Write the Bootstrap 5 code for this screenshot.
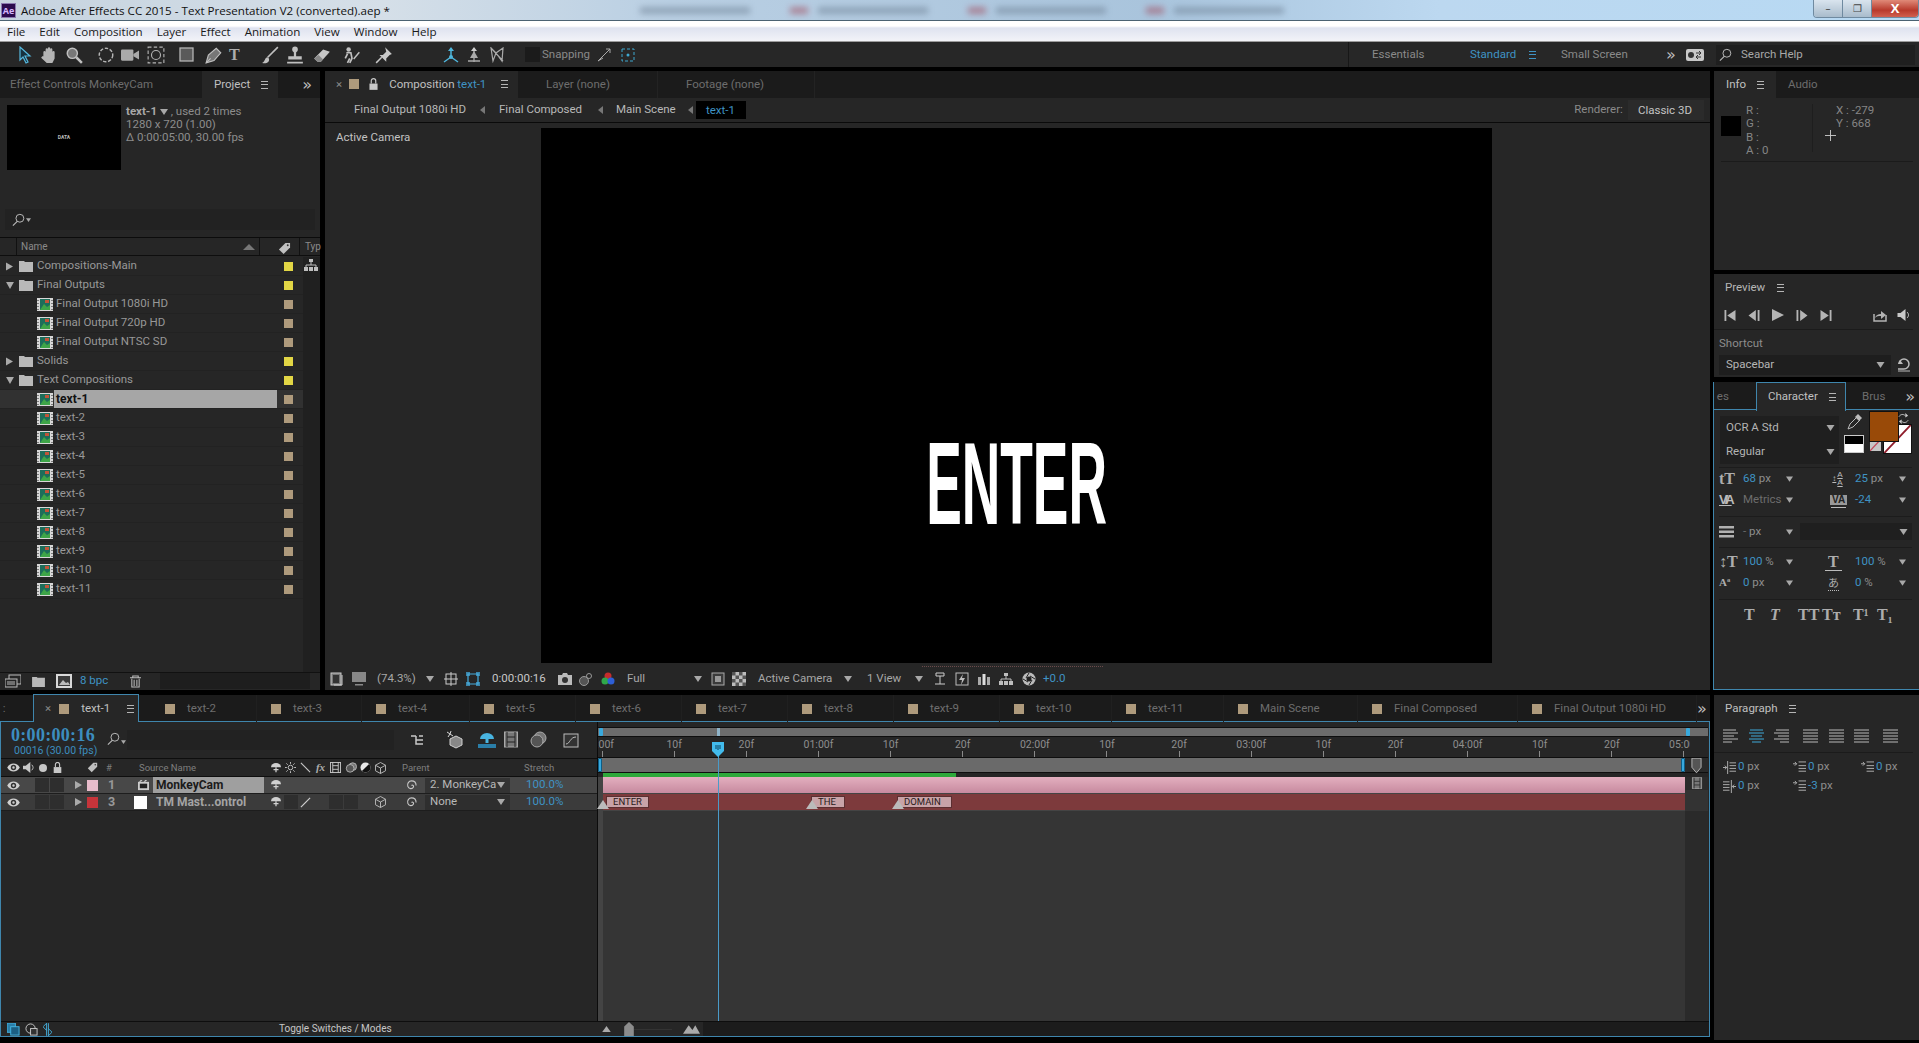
<!DOCTYPE html>
<html lang="en">
<head>
<meta charset="utf-8">
<title>Adobe After Effects CC 2015</title>
<link href="https://cdn.jsdelivr.net/npm/bootstrap@5.3.0/dist/css/bootstrap.min.css" rel="stylesheet">
<style>
html,body{margin:0;background:#000;overflow:hidden}
body{width:1919px;height:1043px;font-family:Roboto,"Liberation Sans",sans-serif;font-size:11.5px;color:#a6a6a6;line-height:1}
svg{display:block;flex:none}
.ae-app{width:1919px;height:1043px;background:#000}
/* window chrome */
.win-title{height:21px;background:linear-gradient(90deg,#c6d3df 0,#d5dfe8 20%,#b9cfe3 35%,#a9c4dc 60%,#bcd8f0 75%,#b7d9f3 100%);border-bottom:1px solid #4b6272;color:#111;font-family:"Open Sans","Liberation Sans",sans-serif;font-size:11.6px;overflow:hidden;padding-top:1px}
.ae-logo{width:15px;height:15px;margin:0 5px 0 1px;background:#2b0b4e;border:1px solid #8c7bb0;color:#d5b7ff;font-size:9px;font-weight:700;text-align:center;line-height:13px;flex:none}
.blur-strip{width:660px;margin-left:250px;gap:40px}
.blur-tab{height:7px;width:110px;background:#6f8296;filter:blur(3px);opacity:.55}
.blur-red{background:#a24a5c;width:18px;margin-right:-30px}
.win-btns{height:18px;margin-top:-4px;border:1px solid #6f8aa0;border-top:0;border-radius:0 0 4px 4px;overflow:hidden}
.wb{width:29px;height:100%;background:linear-gradient(#d9e4ee,#a9bccc);border-right:1px solid #6f8aa0;color:#444;font-size:10px;text-align:center;line-height:17px}
.wb-close{width:46px;background:linear-gradient(#e08a78,#b83a2c 60%,#d06050);color:#fff;font-weight:700;border:0;font-size:13px}
.win-menu{height:21px;background:linear-gradient(#fff 0,#fff 25%,#dfe3f0 35%,#f2f3f8 100%);border-bottom:1px solid #9c9c9c;color:#1a1a1a;font-family:"Open Sans","Liberation Sans",sans-serif;font-size:11.6px;padding:1px 0 0 7px;gap:14px}
/* toolbar */
.tool-strip{height:25px;background:#272727;margin-bottom:4px}
.tool-left{display:grid;grid-template-columns:25px 25px 32px 24px 26px 32px 26px 24px 32px 25px 27px 30px 32px 67px 23px 24px 36px 17px 55px 24px 18px;padding-left:15px;align-items:center}
.tool-right{display:grid;grid-template-columns:98px 59px 32px 105px 20px 30px 1fr;margin-left:auto;width:571px;padding-left:23px;height:100%;align-items:center;border-left:1px solid #171717}
.snap-box{width:15px;height:15px;background:#1b1b1b}
.c-blue{color:#3f93c4}
.c-dim{color:#6d6d6d}
.c-lite{color:#c8c8c8}
.c-mid{color:#8a8a8a}
.searchbox{height:20px;background:#1f1f1f;margin-right:4px;padding-left:3px;gap:8px;color:#a8a8a8}
/* layout */
.col-main{width:1710px}
.col-side{width:205px;margin-left:4px}
.upper{height:619px;gap:5px;margin-bottom:5px}
.ph{background:#262626}
.p-left{width:320px}
.p-comp{width:1385px}
.tabrow{height:27px;background:#1b1b1b}
.tabx{height:100%;background:#262626;gap:0;color:#c0c0c0}
.menu3{width:7px;height:8px;border-top:1px solid #b5b5b5;border-bottom:1px solid #b5b5b5;position:relative;flex:none}
.menu3::after{content:"";position:absolute;left:0;right:0;top:2.5px;height:1px;background:#b5b5b5}
.blue3,.blue3::after{border-color:#3f93c4}
.blue3::after{background:#3f93c4}
.dbl{font-size:16px;color:#bdbdbd;font-family:"DejaVu Sans",sans-serif;line-height:1}
/* project */
.tab-effect{width:202px;padding-left:10px}
.tab-project{width:76px;padding-left:12px;gap:11px}
.proj-info{height:111px;padding:7px 7px 0;gap:5px}
.thumb{width:114px;height:65px;background:#000;color:#bbb;font-size:5px;font-weight:700}
.info-lines{padding-top:0;line-height:13px;color:#8d8d8d}
.info-lines b{color:#a8a8a8;font-weight:700}
.proj-search{height:21px;margin:0 5px;background:#222;padding-left:7px}
.proj-search+div{height:7px}
.proj-head{height:19px;border-top:1px solid #0c0c0c;border-bottom:1px solid #0e0e0e;font-size:10px;color:#8a8a8a;display:grid;grid-template-columns:17px 243px 18px 22px 5px 1fr;align-items:center}
.hsep{border-right:1px solid #111;height:100%}
.proj-body{height:416px;padding-top:1px}
.plist{width:303px}
.typ-col{width:17px;background:#202020;padding:2px 0 0 1px}
.prow{height:19px;display:grid;align-items:center;border-bottom:1px solid #222;color:#989898}
.prow-f{grid-template-columns:19px 18px 240px 7px 9px;}
.prow-c{grid-template-columns:37px 17px 223px 7px 9px}
.prow-c .pname{padding-left:2px}
.pname{height:100%;display:flex;align-items:center}
.pin-y,.pin-t{width:9px;height:9px}
.pin-y{background:#e2d645}
.pin-t{background:#ae9a7c}
.prow-sel{background:#313131}
.prow-sel .pname{background:#a6a6a6;color:#111;font-weight:700;font-size:12px}
.tri-cell{padding-left:6px}
.proj-foot{height:17px;display:grid;grid-template-columns:27px 24px 24px 50px 30px 150px 1fr;padding-left:5px;background:#262626;align-items:center;border-top:1px solid #111}
.foot-dark{height:100%;background:#1e1e1e}
/* comp */
.tab-comp{width:193px;padding-left:11px}
.tab-comp .sw{margin:0 10px 0 7px}
.comp-lock{margin-right:11px}
.comp-name{white-space:nowrap}
.comp-menu{margin-left:15px}
.sw{width:10px;height:10px;background:#ae9a7c;flex:none}
.tab-blank{height:100%;border-right:1px solid #232323;padding-left:28px}
.tab-layer{width:140px}
.tab-foot{width:157px}
.crumbs{height:25px;border-bottom:1px solid #0a0a0a;display:grid;grid-template-columns:29px 126px 19px 99px 18px 72px 8px 50px 1fr 145px;align-items:center;color:#b9b9b9;white-space:nowrap}
.crumb-on{height:18px;background:#000;padding-left:10px;line-height:18px}
.renderer{gap:5px;padding-right:6px;justify-content:flex-end;white-space:nowrap}
.renderer span{height:20px;line-height:20px;background:#2b2b2b;padding:0 12px 0 10px;color:#c4c4c4}
.viewer{height:545px}
.v-left{width:216px;padding:9px 0 0 11px;color:#c2c2c2}
.canvas-col{width:951px}
.canvas{width:951px;height:535px;margin-top:5px;background:#000;padding-top:316px}
.canvas-dots{width:181px;height:1px;margin:3px 0 0 381px;border-top:1px dotted #6a4a4a}
.enter{display:inline-block;font-family:"Liberation Sans",sans-serif;font-weight:700;font-size:116px;line-height:80px;height:80px;color:#fff;transform:scaleX(.46);letter-spacing:0}
.comp-foot{height:23px;display:grid;grid-template-columns:22px 25px 49px 18px 22px 26px 66px 21px 22px 26px 67px 17px 21px 26px 86px 23px 48px 18px 22px 22px 22px 23px 21px 1fr;padding-left:5px;align-items:center;color:#a8a8a8;white-space:nowrap}
/* timeline */
.tl{height:342px}
.tl-tabs{height:27px;background:#1b1b1b;display:grid;grid-template-columns:33px 106px 118px 105px 108px 106px 106px 106px 106px 106px 112px 112px 134px 160px 179px 1fr;border-bottom:1px solid #3f86ad;color:#6e6e6e;align-items:center}
.tl-on{height:28px;margin-top:-1px;background:#262626;border:1px solid #3f86ad;border-bottom:0;color:#c0c0c0;padding-left:11px;gap:8px;position:relative;z-index:2;align-self:start}
.tl-on .sw{margin-right:4px}
.tl-menu{margin-left:9px}
.tl-t{padding-left:14px;gap:12px;height:100%;border-right:1px solid #202020;white-space:nowrap}
.tl-t2{padding-left:26px}
.tl-wrap{height:315px;border:1px solid #3f86ad;border-top:0}
.tl-main{height:299px}
.tl-l{width:597px;border-right:1px solid #0b0b0b}
.tl-ctl{height:37px;border-bottom:1px solid #0e0e0e}
.tc-time{width:106px;padding:3px 0 0 10px}
.tc-big{font-family:"Liberation Serif",serif;font-weight:700;font-size:18px;color:#3c8dbf;letter-spacing:.3px}
.tc-sub{margin:2px 0 0 3px;font-size:10.5px;color:#3c8dbf;white-space:nowrap}
.tc-find{width:20px;margin-top:-2px}
.tc-searchbar{width:267px;height:20px;background:#222;margin-right:16px}
.tc-icons{display:grid;grid-template-columns:35px 33px 26px 25px 34px 18px}
.layer-grid{display:grid;grid-template-columns:4px 16px 14px 15px 14px 23px 11px 36px 19px 111px 4px 120px 37px 85px 14px 1fr;align-items:center;height:100%}
.layer-grid>svg{justify-self:center}
.lh{height:18px;border-bottom:1px solid #0e0e0e;font-size:9.5px;color:#7f7f7f}
.lr{height:17px;border-bottom:1px solid #1d1d1d;font-size:11.5px}
.lr1{background:#484848}
.lr2{background:#3b3b3b}
.switch{display:grid;grid-template-columns:repeat(8,15px);align-items:center;height:100%;justify-items:center}
.dk{width:14px;height:14px;background:#2e2e2e}
.lname{height:100%;padding-left:3px;font-weight:700;font-size:12px;display:flex;align-items:center;white-space:nowrap}
.lr1 .lname{background:#9f9f9f;color:#1b1b1b}
.lr2 .lname{color:#a4a4a4}
.lnum{padding-left:10px;font-weight:700;color:#999;font-size:12.5px}
.label-p,.label-r{width:11px;height:11px}
.label-p{background:#e8bccb}
.label-r{background:#c6343a}
.swcell{width:13px;height:13px;background:#fff}
.pdrop{height:15px;background:#2e2e2e;padding:0 5px 0 5px;color:#b8b8b8;white-space:nowrap;justify-content:space-between}
.lr1 .pdrop{background:#333}
.pdrop-clip{display:block;width:66px;overflow:hidden;flex:none}
.nudge-src{margin-left:-14px;white-space:nowrap}
.nudge-par{margin-left:-23px}
.nudge-arr{margin-left:5px}
.nudge-spi{margin-left:9px}
.pct{padding-left:2px}
.tl-r{width:1110px;background:#333;position:relative}
.tr-top{height:5px;background:#262626}
.tr-nav{height:9px;background:#6c6c6c;border-top:1px solid #0e0e0e;position:relative}
.tr-ruler{height:21px;background:#262626;border-top:1px solid #0e0e0e;overflow:hidden;width:1092px;color:#8e8e8e;font-size:10.5px}
.ruler-in{margin-left:-32px;width:1300px}
.rcell{width:72.13px;flex:none;height:100%;padding-top:3px;display:flex;flex-direction:column;align-items:center;justify-content:space-between}
.rcell i{display:block;width:1px;height:7px;background:#8a8a8a}
.tr-work{height:16px;background:#6a6a6a;border-top:1px solid #0e0e0e;border-bottom:1px solid #0e0e0e}
.tr-ruler-row{background:#262626}
.handle{width:4px;height:14px;background:#39a9dd;border:1px solid #0d5d86;border-radius:1px;flex:none}
.tr-green{height:4px;background:#252525;padding-left:5px}
.tr-green i{display:block;height:4px;width:353px;background:#2da83a}
.track{height:17px;padding-left:5px;background:#444}
.track-wrap{width:1087px;display:flex}
.bar-p{height:16px;width:1082px;background:linear-gradient(#e3afbf,#c78a9f)}
.bar-r{height:16px;width:1082px;background:#7d3a3c;position:relative}
.track-end{width:23px;background:#2a2a2a;height:100%}
.tr-rest{height:210px;display:flex}
.rest-a{width:5px;background:#444}
.rest-b{width:1082px;background:#353535}
.rest-c{flex:1;background:#2a2a2a}
.mk{position:absolute;top:2px;height:12px;background:#c8a3a8;color:#2a1a1a;font-size:9.5px;line-height:10px;padding-left:6px;border:1px solid #5b2f31}
.mk1{left:3px;width:43px}
.mk2{left:208px;width:34px}
.mk3{left:294px;width:55px}
.mk-tri{position:absolute;width:0;height:0;border-left:6px solid transparent;border-right:6px solid transparent;border-bottom:9px solid #bbb;top:6px;z-index:1}
.mt1{left:-6px}
.mt2{left:203px}
.mt3{left:289px}
.ph-line{position:absolute;left:120px;top:34px;bottom:0;width:1px;background:#4a9ac8;z-index:3}
.ph-head{position:absolute;left:114px;top:20px;z-index:4}
.nav-ph{position:absolute;left:119px;top:0;width:3px;height:100%;background:#8fb3c8}
.nav-end-l{position:absolute;left:1px;top:0}
.nav-end-r{position:absolute;left:1088px;top:0}
.tl-bot{height:15px;display:grid;grid-template-columns:18px 18px 236px 323px 1fr;padding-left:6px;background:linear-gradient(90deg,#262626 702px,#1c1c1c 702px);border-top:1px solid #0e0e0e;align-items:center;color:#c6c6c6;font-size:10px;white-space:nowrap}
.zoombar{gap:0}
.zline{width:38px;height:1px;background:#333}
.z-a{margin-right:13px}
.z-b{margin-left:11px}
/* side */
.s-info{height:199px;margin-bottom:4px}
.tab-info{width:62px;padding-left:12px;gap:11px;height:100%;background:#262626;color:#c0c0c0}
.info-c{height:64px;margin:0 6px 0 7px;border-bottom:1px solid #1b1b1b;color:#858585;padding-top:6px}
.ic-sw{width:20px;height:20px;background:#000;margin:12px 5px 0 0}
.ic-rgb{width:67px;line-height:13.3px;border-right:1px solid #1e1e1e;padding-bottom:0;height:48px}
.ic-xy{line-height:13px;padding-left:23px}
.xy-cross{margin-left:-11px}
.s-prev{height:103px;margin-bottom:5px}
.prev-h{height:27px;padding-left:11px;gap:12px;color:#b6b6b6}
.prev-ctl{height:29px;display:grid;grid-template-columns:24px 24px 24px 24px 53px 24px 1fr;padding-left:10px;margin:0 6px 0 0;align-items:center;border-bottom:1px solid #1b1b1b}
.short-l{padding:8px 0 0 5px;color:#8d8d8d}
.short-d{height:20px;margin:5px 6px 0 5px;gap:0;color:#b6b6b6}
.dd-fill{background:#1e1e1e;height:100%;width:172px;padding:0 6px 0 7px}
.loop-gap{margin-left:6px}
.s-char{height:308px;margin-bottom:5px;background:#262626;border-left:1px solid #3f86ad;border-bottom:1px solid #3f86ad;margin-left:-1px}
.ch-tabs{height:28px;background:#1b1b1b;display:grid;grid-template-columns:42px 90px 52px 1fr;align-items:center;border-bottom:1px solid #3f86ad;color:#6e6e6e}
.ch-on{height:29px;margin-top:0;background:#262626;border:1px solid #3f86ad;border-bottom:0;color:#c0c0c0;padding-left:11px;gap:11px;align-self:start}
.ch-top{height:57px;padding:6px 0 0 6px}
.dds{width:120px}
.dd{height:24px;background:#1f1f1f;padding:0 4px 0 6px;color:#b4b4b4;margin-bottom:0}
.sw-zone{width:80px;height:50px}
.s-white{position:absolute;left:44px;top:8px;width:29px;height:30px;background:#fff;border:1px solid #111}
.s-brown{position:absolute;left:30px;top:-5px;width:30px;height:31px;background:#994a08;border:1px solid #111}
.s-bw{position:absolute;left:5px;top:19px;width:20px;height:18px;border:1px solid #ccc;background:linear-gradient(#000 50%,#fff 50%)}
.s-none{position:absolute;left:31px;top:23px;width:11px;height:12px;background:#c6c6c6}
.s-drop{position:absolute;left:8px;top:-2px}
.s-swap{position:absolute;left:59px;top:-3px}
.ch-sec{margin:0 7px 0 5px;border-top:1px solid #1c1c1c}
.mg{display:grid;grid-template-columns:24px 43px 34px 35px 44px 1fr;height:21px;align-items:center;color:#8e8e8e}
.mg .v,.pp .v{color:#3f93c4}
.gl{font-family:"Liberation Serif",serif;font-weight:700;color:#adadad;font-size:16px;line-height:1;white-space:nowrap}
.gl-s{font-size:11px}
.stack{font-family:"Liberation Sans",sans-serif;font-size:8px;line-height:8px;color:#bbb;display:flex;align-items:center;justify-content:center;gap:1px;text-decoration:underline}
.kern{font-family:"Liberation Sans",sans-serif;font-weight:700;font-size:13px;letter-spacing:-3px;color:#bbb;text-decoration:underline}
.va-box{background:#999;color:#222;font-family:"Liberation Sans",sans-serif;font-weight:700;font-size:10px;line-height:10px;padding:0 2px;display:inline-block;margin-left:10px;box-shadow:0 3px 0 -1px #262626,0 4px 0 -1px #bbb}
.jp{font-family:"Noto Sans CJK JP",sans-serif;font-weight:400;border-bottom:1px dotted #bbb}
.wide-t{border-bottom:1px solid #bbb;padding:0 3px;margin-left:5px}
.ch-sec1{height:49px;padding-top:0}
.ch-sec2{height:31px;padding-top:4px}
.ch-sec3{height:52px;padding-top:3px}
.ch-sec4{padding-top:4px}
.ch-styles{display:grid;grid-template-columns:26px 28px 24px 31px 24px 1fr;padding-left:25px;height:21px;align-items:center}
.ch-wide{height:17px;background:#1f1f1f;width:112px;padding:0 4px;margin-left:-20px}
.s-para{height:345px}
.para-h{height:27px;padding-left:11px;gap:11px;color:#c0c0c0}
.para-al{display:grid;grid-template-columns:26px 25px 29px 26px 25px 29px 1fr;height:31px;padding:7px 0 0 9px;margin:0 6px 0 0;align-items:start;border-bottom:1px solid #1b1b1b}
.pp{display:grid;grid-template-columns:15px 55px 15px 53px 15px 1fr;height:18px;padding-left:9px;align-items:center;color:#8e8e8e;margin-top:1px}
.para-al+.pp{margin-top:5px}
.task{height:3px;margin-top:3px;background:#5a7c93;gap:4px;padding-left:120px}
.task i{display:block;width:56px;height:3px;background:#e8eef2}
</style>
</head>
<body>
<svg width="0" height="0" style="position:absolute">
<symbol id="dn" viewBox="0 0 8 6"><path d="M0 0h8L4 6z" fill="#a8a8a8"/></symbol>
<symbol id="up" viewBox="0 0 12 6"><path d="M0 6L6 0l6 6z" fill="#777"/></symbol>
<symbol id="rt" viewBox="0 0 8 9"><path d="M0 0l8 4.500L0 9z" fill="#aaa"/></symbol>
<symbol id="dt" viewBox="0 0 9 8"><path d="M0 0h9L4.500 8z" fill="#aaa"/></symbol>
<symbol id="lt" viewBox="0 0 5 8"><path d="M5 0v8L0 4z" fill="#777"/></symbol>
<symbol id="arrow" viewBox="0 0 16 18"><path d="M4 1v13l3-3 3 6 2-1-3-6h5z" fill="#16323f" stroke="#56b8de" stroke-width="1.200"/></symbol>
<symbol id="hand" viewBox="0 0 16 16"><path d="M3 9V5.500a1 1 0 0 1 2 0V3a1 1 0 0 1 2 0V2a1 1 0 0 1 2 0v1a1 1 0 0 1 2 0v2.500a1 1 0 0 1 2 0V11l-2 4H6L1 10.500 2 9z" fill="#b4b4b4"/></symbol>
<symbol id="mag" viewBox="0 0 16 16"><circle cx="6.500" cy="6.500" r="4.500" fill="#777" stroke="#c0c0c0" stroke-width="1.300"/><path d="M10 10l5 5" stroke="#c0c0c0" stroke-width="2.200"/></symbol>
<symbol id="find" viewBox="0 0 16 16"><circle cx="9" cy="6" r="4.500" fill="none" stroke="#bcbcbc" stroke-width="1.100"/><path d="M6 9.500l-5 5" stroke="#bcbcbc" stroke-width="1.300"/></symbol>
<symbol id="rot" viewBox="0 0 16 16"><circle cx="8" cy="8" r="6" fill="none" stroke="#b4b4b4" stroke-width="1.300" stroke-dasharray="3 1.500"/></symbol>
<symbol id="cam" viewBox="0 0 16 16"><rect x="0" y="3" width="11" height="10" rx="1" fill="#aaa"/><path d="M11 7l5-3v8l-5-3z" fill="#aaa"/></symbol>
<symbol id="orb" viewBox="0 0 16 16"><rect x="1" y="1" width="14" height="14" fill="none" stroke="#b4b4b4" stroke-dasharray="3 2"/><circle cx="8" cy="8" r="4" fill="none" stroke="#b4b4b4"/></symbol>
<symbol id="rect" viewBox="0 0 16 16"><rect x="1" y="1" width="13" height="13" fill="#5a5a5a" stroke="#b4b4b4" stroke-width="1.300"/></symbol>
<symbol id="pen" viewBox="0 0 16 16"><path d="M1 15l2-7 7-6 4 4-6 7z" fill="#777" stroke="#c0c0c0"/><path d="M1 15l4-4" stroke="#c0c0c0"/></symbol>
<symbol id="brush" viewBox="0 0 16 16"><path d="M15 1L6 10" stroke="#c0c0c0" stroke-width="1.500"/><path d="M6 10c-3 0-2 4-5 5 4 1 7-1 6-4z" fill="#c0c0c0"/></symbol>
<symbol id="stamp" viewBox="0 0 16 16"><circle cx="8" cy="3" r="2.500" fill="#c0c0c0"/><path d="M7 5h2v4h5v3H2V9h5zM1 14h14v1.500H1z" fill="#c0c0c0"/></symbol>
<symbol id="eraser" viewBox="0 0 16 16"><path d="M1 11l8-8 6 2-8 9H4z" fill="#c8c8c8"/><path d="M1 11l3 3h3l2-2-4-4z" fill="#888"/></symbol>
<symbol id="roto" viewBox="0 0 16 16"><circle cx="5" cy="3" r="2" fill="#c0c0c0"/><path d="M3 6l4 0 1 5-2 4M4 7L2 11M6 11L4 15" stroke="#c0c0c0" stroke-width="1.500" fill="none"/><path d="M9 11l5-6 1 1-5 6z" fill="#c0c0c0"/></symbol>
<symbol id="pin" viewBox="0 0 16 16"><path d="M9 1l6 6-2 1-3 3 0 3-6-6 3 0 3-3z" fill="#c8c8c8"/><path d="M6 10l-5 5" stroke="#c8c8c8" stroke-width="1.300"/></symbol>
<symbol id="axb" viewBox="0 0 18 16"><path d="M9 1v9M9 10l-7 5M9 10l7 5" stroke="#4fb6dc" stroke-width="1.500"/><path d="M9 0l-3 4h6z" fill="#4fb6dc"/><circle cx="9" cy="10" r="2" fill="#4fb6dc"/></symbol>
<symbol id="axg" viewBox="0 0 18 16"><path d="M9 1v14M3 14h12" stroke="#aaa" stroke-width="1.300"/><path d="M5 11l4-7 4 7z" fill="#aaa"/><path d="M9 0l-3 4h6z" fill="#ccc"/></symbol>
<symbol id="axx" viewBox="0 0 16 16"><path d="M2 1l5 5-3 8zM14 1l-7 5 6 8zM2 1l12 13" fill="none" stroke="#aaa" stroke-width="1.200"/></symbol>
<symbol id="snap1" viewBox="0 0 14 14"><path d="M1 13L13 1M13 1H9M13 1v4M1 13l5-3" stroke="#aaa" fill="none"/></symbol>
<symbol id="snap2" viewBox="0 0 14 14"><rect x="1" y="1" width="12" height="12" fill="none" stroke="#3fa8d0" stroke-dasharray="3 2"/><circle cx="7" cy="7" r="1.500" fill="#3fa8d0"/></symbol>
<symbol id="vr" viewBox="0 0 18 12"><rect width="18" height="12" rx="2" fill="#c8c8c8"/><circle cx="5" cy="6" r="3" fill="#333"/><path d="M10 4h5M10 8h5M13 2l2 2-2 2M12 6l-2 2 2 2" stroke="#333" fill="none"/></symbol>
<symbol id="folder" viewBox="0 0 14 12"><path d="M0 1h5l1 1h8v10H0z" fill="#b9b9b9"/></symbol>
<symbol id="comp" viewBox="0 0 16 13"><rect width="16" height="13" fill="#d8d8d8"/><rect x="3" y="1" width="10" height="11" fill="#1e6d5a"/><path d="M3 12l4-6 3 3 3-2v5z" fill="#3ea548"/><rect x="8" y="2" width="4" height="3" fill="#c25438"/><path d="M1 2v1M1 5v1M1 8v1M1 11v1M15 2v1M15 5v1M15 8v1M15 11v1" stroke="#222"/></symbol>
<symbol id="tag" viewBox="0 0 14 14"><path d="M1 8l7-7h5v5l-7 7z" fill="#c0c0c0"/><circle cx="10.500" cy="3.500" r="1" fill="#333"/></symbol>
<symbol id="tree" viewBox="0 0 14 12"><path d="M5 0h4v3H5zM0 8h4v4H0zM5 8h4v4H5zM10 8h4v4h-4z" fill="#bdbdbd"/><path d="M7 3v3M2 8V6h10v2" stroke="#bdbdbd" fill="none"/></symbol>
<symbol id="newcomp" viewBox="0 0 16 14"><rect x="4" y="1" width="12" height="9" fill="none" stroke="#bbb"/><rect x="0" y="5" width="12" height="8" fill="#262626" stroke="#bbb"/><path d="M2 8h8M2 10h8" stroke="#bbb"/></symbol>
<symbol id="imgico" viewBox="0 0 16 14"><rect width="16" height="14" fill="#d8d8d8"/><rect x="2" y="2" width="12" height="10" fill="#3a3a3a"/><path d="M3 11l4-5 3 3 2-1 2 3z" fill="#bbb"/></symbol>
<symbol id="trash" viewBox="0 0 12 14"><path d="M0 3h12M3 3V1h6v2M2 4v9h8V4M4.500 5v7M7.500 5v7" stroke="#bdbdbd" fill="none" stroke-width="1.100"/></symbol>
<symbol id="eye" viewBox="0 0 14 10"><path d="M0 5c3-6 11-6 14 0-3 6-11 6-14 0z" fill="#d0d0d0"/><circle cx="7" cy="5" r="3" fill="#333"/><circle cx="7" cy="5" r="1.300" fill="#ccc"/></symbol>
<symbol id="spk" viewBox="0 0 12 12"><path d="M0 4h3l5-4v12L3 8H0z" fill="#c8c8c8"/><path d="M9.500 3c2 2 2 4 0 6" stroke="#c8c8c8" fill="none"/></symbol>
<symbol id="lock" viewBox="0 0 10 13"><path d="M2.500 6V3a2.500 2.500 0 0 1 5 0v3" fill="none" stroke="#c8c8c8" stroke-width="1.300"/><rect x="0.500" y="6" width="9" height="7" fill="#c8c8c8"/></symbol>
<symbol id="shy" viewBox="0 0 14 12"><path d="M1 5a6 5 0 0 1 12 0z" fill="#d0d0d0"/><path d="M7 5v6M4 8h6" stroke="#d0d0d0" stroke-width="1.500"/></symbol>
<symbol id="shyb" viewBox="0 0 18 16"><path d="M2 7a7 6 0 0 1 14 0z" fill="#49b4e0"/><path d="M9 7v4" stroke="#49b4e0" stroke-width="3"/><path d="M0 12h18v4H0z" fill="#2a7ea8"/></symbol>
<symbol id="sun" viewBox="0 0 12 12"><circle cx="6" cy="6" r="2.500" fill="none" stroke="#c8c8c8"/><path d="M6 0v2M6 10v2M0 6h2M10 6h2M1.500 1.500l1.500 1.500M9 9l1.500 1.500M1.500 10.500L3 9M9 3l1.500-1.500" stroke="#c8c8c8"/></symbol>
<symbol id="slash" viewBox="0 0 12 12"><path d="M1 1l10 10" stroke="#c8c8c8" stroke-width="1.200"/></symbol>
<symbol id="slash2" viewBox="0 0 12 12"><path d="M1 11L11 1" stroke="#d0d0d0" stroke-width="1.300"/></symbol>
<symbol id="film" viewBox="0 0 12 12"><rect x="0.500" y="0.500" width="11" height="11" fill="none" stroke="#c8c8c8"/><path d="M3 0v12M9 0v12M3 4h6M3 8h6" stroke="#c8c8c8"/></symbol>
<symbol id="mb" viewBox="0 0 14 12"><circle cx="9" cy="5" r="4.500" fill="#777" stroke="#bbb"/><circle cx="6" cy="7" r="4.500" fill="#555" stroke="#bbb"/></symbol>
<symbol id="adj" viewBox="0 0 12 12"><circle cx="6" cy="6" r="5.500" fill="#e8e8e8"/><path d="M9.900 2.100a5.500 5.500 0 0 1-7.800 7.800z" fill="#111"/></symbol>
<symbol id="cube" viewBox="0 0 12 13"><path d="M6 .500l5.500 3v6L6 12.500.5 9.500v-6zM.5 3.500L6 6.500l5.500-3M6 6.500v6" fill="none" stroke="#c0c0c0"/></symbol>
<symbol id="spiral" viewBox="0 0 12 12"><path d="M6 6c1-1 3 0 2 2s-5 2-6-1 1-6 4-6 5 2 5 5" fill="none" stroke="#c8c8c8" stroke-width="1.200"/></symbol>
<symbol id="srcico" viewBox="0 0 12 12"><rect y="2" width="12" height="9" fill="#ccc"/><rect x="2" y="4" width="8" height="5" fill="#222"/><path d="M1 2l2-2h2L3 2zM6 2l2-2h2L8 2z" fill="#ccc"/></symbol>
<symbol id="comm" viewBox="0 0 14 12"><path d="M0 2h5M5 2v4M5 6h7M8 2h4M8 10h4M5 6v4h3" stroke="#c8c8c8" fill="none" stroke-width="1.500"/></symbol>
<symbol id="dcube" viewBox="0 0 18 18"><path d="M5 3l-3-2M5 3L3 6M5 3l1-3M5 3L8 5" stroke="#d8d8d8"/><path d="M11 5l6 3v6l-6 3-6-3V8z" fill="#888" stroke="#d0d0d0"/></symbol>
<symbol id="dfilm" viewBox="0 0 14 18"><rect x="0.500" y="1" width="13" height="15" fill="#777" stroke="#aaa"/><path d="M3 1v15M11 1v15M3 6h8M3 11h8" stroke="#222"/></symbol>
<symbol id="dmb" viewBox="0 0 18 18"><circle cx="11" cy="7" r="6" fill="#777" stroke="#aaa"/><circle cx="8" cy="10" r="6" fill="#555" stroke="#aaa"/></symbol>
<symbol id="graph" viewBox="0 0 16 16"><rect x="1" y="2" width="14" height="13" fill="#333" stroke="#bbb"/><path d="M3 12c4 0 4-7 10-7" stroke="#bbb" fill="none"/></symbol>
<symbol id="fr1" viewBox="0 0 14 14"><rect x="1" y="1" width="10" height="12" fill="#777" stroke="#ccc"/><rect x="3" y="3" width="6" height="8" fill="#333"/><path d="M12 3v10H4" fill="none" stroke="#ccc"/></symbol>
<symbol id="mon" viewBox="0 0 14 14"><rect y="0" width="14" height="10" fill="#888"/><path d="M3 12h8v1.500H3z" fill="#888"/></symbol>
<symbol id="gridc" viewBox="0 0 14 14"><rect x="2" y="2" width="10" height="10" fill="none" stroke="#ccc"/><path d="M7 0v14M0 7h14" stroke="#ccc"/></symbol>
<symbol id="mask" viewBox="0 0 14 14"><path d="M2 2h10v10H2z" fill="none" stroke="#46aee0" stroke-width="1.200"/><path d="M0 0h4v4H0zM10 0h4v4h-4zM0 10h4v4H0zM10 10h4v4h-4z" fill="#46aee0" opacity=".7"/></symbol>
<symbol id="camr" viewBox="0 0 14 12"><path d="M0 2h4l1-2h4l1 2h4v10H0z" fill="#bbb"/><circle cx="7" cy="7" r="3" fill="#333"/></symbol>
<symbol id="snapb" viewBox="0 0 14 14"><circle cx="5" cy="9" r="4.500" fill="#555" stroke="#999"/><circle cx="10" cy="4" r="2.500" fill="none" stroke="#999"/></symbol>
<symbol id="rgb" viewBox="0 0 14 14"><circle cx="7" cy="4" r="3.500" fill="#c42c2c"/><circle cx="4" cy="9" r="3.500" fill="#2fa84a"/><circle cx="10" cy="9" r="3.500" fill="#2e5fd6"/></symbol>
<symbol id="rr" viewBox="0 0 14 14"><rect x="1" y="1" width="12" height="12" fill="#3b3b3b" stroke="#aaa"/><rect x="4" y="4" width="6" height="6" fill="#999"/></symbol>
<symbol id="check" viewBox="0 0 14 14"><rect width="14" height="14" fill="#bbb"/><path d="M0 0h3.500v3.500H0zM7 0h3.500v3.500H7zM3.500 3.500H7V7H3.500zM10.500 3.500H14V7h-3.500zM0 7h3.500v3.500H0zM7 7h3.500v3.500H7zM3.500 10.500H7V14H3.500zM10.500 10.500H14V14h-3.500z" fill="#555"/></symbol>
<symbol id="lr" viewBox="0 0 14 14"><path d="M7 4v8M3 1h8v3H3zM2 12h10" stroke="#ccc" fill="none"/></symbol>
<symbol id="fast" viewBox="0 0 14 14"><rect x="1" y="1" width="12" height="12" fill="none" stroke="#bbb"/><path d="M8 2L4 8h3l-1 5 4-7H7z" fill="#bbb"/></symbol>
<symbol id="flow" viewBox="0 0 14 14"><rect x="1" y="5" width="3" height="8" fill="#aaa"/><rect x="5.500" y="2" width="3" height="11" fill="#ddd"/><rect x="10" y="5" width="3" height="8" fill="#aaa"/></symbol>
<symbol id="shutter" viewBox="0 0 14 14"><circle cx="7" cy="7" r="6.500" fill="#bbb"/><circle cx="7" cy="7" r="2.500" fill="#222"/><path d="M7 1L4 6M13 7l-5-3M7 13l3-5M1 7l5 3" stroke="#222"/></symbol>
<symbol id="first" viewBox="0 0 12 12"><path d="M0 0h2v12H0zM12 0v12L3 6z" fill="#b4b4b4"/></symbol>
<symbol id="prevf" viewBox="0 0 12 12"><path d="M8 0v12L0 6zM10 0h2v12h-2z" fill="#b4b4b4"/></symbol>
<symbol id="playf" viewBox="0 0 12 12"><path d="M0 0v12l12-6z" fill="#b4b4b4"/></symbol>
<symbol id="nextf" viewBox="0 0 12 12"><path d="M0 0h2v12H0zM4 0v12l8-6z" fill="#b4b4b4"/></symbol>
<symbol id="last" viewBox="0 0 12 12"><path d="M0 0v12l9-6zM10 0h2v12h-2z" fill="#b4b4b4"/></symbol>
<symbol id="export" viewBox="0 0 14 13"><path d="M1 5v7h12V6" fill="none" stroke="#b4b4b4" stroke-width="1.500"/><path d="M2 9c1-3 3-4 6-4V2l5 4-5 4V7c-3 0-4 0-6 2z" fill="#b4b4b4"/></symbol>
<symbol id="loop" viewBox="0 0 14 14"><path d="M2 6a5 5 0 1 1 5 5H1" fill="none" stroke="#bbb" stroke-width="1.500"/><path d="M1 6h5L3 2z" fill="#bbb"/><path d="M1 13h12" stroke="#bbb"/></symbol>
<symbol id="drop" viewBox="0 0 16 16"><path d="M1 15l2-5 7-7 3 3-7 7z" fill="none" stroke="#bbb"/><path d="M9 2l2-2 4 4-2 2-1 1-4-4z" fill="#bbb"/></symbol>
<symbol id="swap" viewBox="0 0 12 12"><path d="M1 4c2-3 5-3 7-1M11 8c-2 3-5 3-7 1" fill="none" stroke="#ccc"/><path d="M8 0v5l3-2zM4 12V7L1 9z" fill="#ccc"/></symbol>
<symbol id="line" viewBox="0 0 30 32"><path d="M0 32L30 0" stroke="#8f1d2b" stroke-width="2"/></symbol>
<symbol id="lsm" viewBox="0 0 11 12"><path d="M0 12L11 0" stroke="#c34a5c" stroke-width="1.200"/></symbol>
<symbol id="eq" viewBox="0 0 15 13"><path d="M0 1h15v2.500H0zM0 5.500h15V8H0zM0 10h15v2.500H0z" fill="#b0b0b0"/></symbol>
<symbol id="hshield" viewBox="0 0 12 16"><path d="M1 0h10v10l-5 6-5-6z" fill="#555" stroke="#bbb"/></symbol>
<symbol id="head" viewBox="0 0 12 15"><path d="M0 0h12v9l-6 6-6-6z" fill="#42bbec"/><path d="M4 3v4M6 3v5M8 3v4" stroke="#08425e"/></symbol>
<symbol id="al" viewBox="0 0 15 15"><path d="M0 1h13M0 4h15M0 7h11M0 10h15M0 13h9" stroke="#b8b8b8"/></symbol>
<symbol id="ac" viewBox="0 0 15 15"><path d="M1 1h13M0 4h15M2 7h11M0 10h15M3 13h9" stroke="#3fa8d8"/></symbol>
<symbol id="ar" viewBox="0 0 15 15"><path d="M2 1h13M0 4h15M4 7h11M0 10h15M6 13h9" stroke="#b8b8b8"/></symbol>
<symbol id="aj" viewBox="0 0 15 15"><path d="M0 1h15M0 4h15M0 7h15M0 10h15M0 13h15" stroke="#b8b8b8"/></symbol>
<symbol id="pa" viewBox="0 0 14 14"><path d="M5 0v14M7 2h7M7 5h7M7 8h7M7 11h7M0 7h4M2 5l2 2-2 2" stroke="#b4b4b4" fill="none"/></symbol>
<symbol id="pb" viewBox="0 0 14 14"><path d="M9 0v14M0 2h7M0 5h7M0 8h7M0 11h7M10 7h4M12 5l-2 2 2 2" stroke="#b4b4b4" fill="none"/></symbol>
<symbol id="pc" viewBox="0 0 14 14"><path d="M6 1h8M6 5h8M6 8h8M6 11h8M0 3h4M2 1l2 2-2 2" stroke="#b4b4b4" fill="none"/></symbol>
<symbol id="ic1" viewBox="0 0 14 14"><rect x="0" y="0" width="9" height="10" fill="#2a7ea8" stroke="#46b6e4"/><rect x="4" y="4" width="9" height="9" fill="#1c5f83" stroke="#46b6e4"/></symbol>
<symbol id="ic2" viewBox="0 0 14 14"><circle cx="6" cy="6" r="5" fill="none" stroke="#ccc"/><rect x="6" y="6" width="7" height="7" fill="#333" stroke="#ccc"/></symbol>
<symbol id="ic3" viewBox="0 0 10 14"><path d="M4 0L0 4l4 4M6 6l4 4-4 4M4 0v14M6 0v14" stroke="#46b6e4" fill="none"/></symbol>
<symbol id="mtn1" viewBox="0 0 10 7"><path d="M0 7l5-7 5 7z" fill="#aaa"/></symbol>
<symbol id="mtn2" viewBox="0 0 18 10"><path d="M0 10L6 1l4 5 3-5 5 9z" fill="#aaa"/></symbol>
<symbol id="slid" viewBox="0 0 11 16"><path d="M0 5l5.500-5L11 5v11H0z" fill="#8c8c8c"/></symbol>
<symbol id="cross" viewBox="0 0 12 12"><path d="M6 0v12M0 6h12" stroke="#ccc"/></symbol>
</svg>

<div class="ae-app">
  <header class="win-title d-flex align-items-center">
    <span class="ae-logo">Ae</span>
    <span class="text-nowrap">Adobe After Effects CC 2015 - Text Presentation V2 (converted).aep *</span>
    <span class="blur-strip d-flex"><i class="blur-tab"></i><i class="blur-tab blur-red"></i><i class="blur-tab"></i><i class="blur-tab blur-red"></i><i class="blur-tab"></i><i class="blur-tab blur-red"></i><i class="blur-tab"></i></span>
    <span class="win-btns ms-auto d-flex"><span class="wb">–</span><span class="wb">❐</span><span class="wb wb-close">X</span></span>
  </header>
  <nav class="win-menu d-flex align-items-center">
    <span>File</span><span>Edit</span><span>Composition</span><span>Layer</span><span>Effect</span><span>Animation</span><span>View</span><span>Window</span><span>Help</span>
  </nav>
  <div class="tool-strip d-flex align-items-center">
    <div class="tool-left">
      <svg width="18" height="18"><use href="#arrow"/></svg>
      <svg width="18" height="18"><use href="#hand"/></svg>
      <svg width="18" height="18"><use href="#mag"/></svg>
      <svg width="18" height="18"><use href="#rot"/></svg>
      <svg width="18" height="18"><use href="#cam"/></svg>
      <svg width="18" height="18"><use href="#orb"/></svg>
      <svg width="16" height="16"><use href="#rect"/></svg>
      <svg width="18" height="18"><use href="#pen"/></svg>
      <span class="gl">T</span>
      <svg width="18" height="18"><use href="#brush"/></svg>
      <svg width="18" height="18"><use href="#stamp"/></svg>
      <svg width="18" height="18"><use href="#eraser"/></svg>
      <svg width="18" height="18"><use href="#roto"/></svg>
      <svg width="18" height="18"><use href="#pin"/></svg>
      <svg width="18" height="16"><use href="#axb"/></svg>
      <svg width="18" height="16"><use href="#axg"/></svg>
      <svg width="16" height="16"><use href="#axx"/></svg>
      <span class="snap-box"></span>
      <span class="c-mid">Snapping</span>
      <svg width="14" height="14"><use href="#snap1"/></svg>
      <svg width="14" height="14"><use href="#snap2"/></svg>
    </div>
    <div class="tool-right">
      <span class="c-mid">Essentials</span>
      <span class="c-blue">Standard</span>
      <span class="menu3 blue3"></span>
      <span class="c-mid">Small Screen</span>
      <span class="dbl">»</span>
      <svg width="18" height="12"><use href="#vr"/></svg>
      <div class="searchbox d-flex align-items-center"><svg width="14" height="14"><use href="#find"/></svg><span>Search Help</span></div>
    </div>
  </div>

  <div class="d-flex">
    <div class="col-main">
      <div class="upper d-flex">
        <section class="p-left ph d-flex flex-column">
          <div class="tabrow d-flex align-items-center">
            <div class="tab-effect c-dim">Effect Controls MonkeyCam</div>
            <div class="tabx tab-project d-flex align-items-center"><span>Project</span><span class="menu3"></span></div>
            <span class="dbl ms-auto me-2">»</span>
          </div>
          <div class="proj-info d-flex">
            <div class="thumb d-flex align-items-center justify-content-center">DATA</div>
            <div class="info-lines"><b>text-1</b> <svg class="d-inline" width="8" height="6"><use href="#dn"/></svg> , used 2 times<br>1280 x 720 (1.00)<br>Δ 0:00:05:00, 30.00 fps</div>
          </div>
          <div class="proj-search d-flex align-items-center"><svg width="14" height="14"><use href="#find"/></svg><svg class="ms-0" width="5" height="4"><use href="#dn"/></svg></div>
          <div></div>
          <div class="proj-head"><span class="hsep"></span><span class="ps-1 d-flex align-items-center justify-content-between pe-1 hsep"><span>Name</span><svg width="12" height="6"><use href="#up"/></svg></span><span></span><span class="hsep"><svg class="mt-1" width="13" height="13"><use href="#tag"/></svg></span><span></span><span>Typ</span></div>
          <div class="proj-body d-flex">
            <ul class="plist list-unstyled mb-0">
              <li class="prow prow-f"><span class="tri-cell"><svg width="7" height="9"><use href="#rt"/></svg></span><svg width="14" height="12"><use href="#folder"/></svg><span class="pname">Compositions-Main</span><i></i><span class="pin-y"></span></li>
              <li class="prow prow-f"><span class="tri-cell"><svg width="8" height="7"><use href="#dt"/></svg></span><svg width="14" height="12"><use href="#folder"/></svg><span class="pname">Final Outputs</span><i></i><span class="pin-y"></span></li>
              <li class="prow prow-c"><i></i><svg width="16" height="13"><use href="#comp"/></svg><span class="pname">Final Output 1080i HD</span><i></i><span class="pin-t"></span></li>
              <li class="prow prow-c"><i></i><svg width="16" height="13"><use href="#comp"/></svg><span class="pname">Final Output 720p HD</span><i></i><span class="pin-t"></span></li>
              <li class="prow prow-c"><i></i><svg width="16" height="13"><use href="#comp"/></svg><span class="pname">Final Output NTSC SD</span><i></i><span class="pin-t"></span></li>
              <li class="prow prow-f"><span class="tri-cell"><svg width="7" height="9"><use href="#rt"/></svg></span><svg width="14" height="12"><use href="#folder"/></svg><span class="pname">Solids</span><i></i><span class="pin-y"></span></li>
              <li class="prow prow-f"><span class="tri-cell"><svg width="8" height="7"><use href="#dt"/></svg></span><svg width="14" height="12"><use href="#folder"/></svg><span class="pname">Text Compositions</span><i></i><span class="pin-y"></span></li>
              <li class="prow prow-c prow-sel"><i></i><svg width="16" height="13"><use href="#comp"/></svg><span class="pname">text-1</span><i></i><span class="pin-t"></span></li>
              <li class="prow prow-c"><i></i><svg width="16" height="13"><use href="#comp"/></svg><span class="pname">text-2</span><i></i><span class="pin-t"></span></li>
              <li class="prow prow-c"><i></i><svg width="16" height="13"><use href="#comp"/></svg><span class="pname">text-3</span><i></i><span class="pin-t"></span></li>
              <li class="prow prow-c"><i></i><svg width="16" height="13"><use href="#comp"/></svg><span class="pname">text-4</span><i></i><span class="pin-t"></span></li>
              <li class="prow prow-c"><i></i><svg width="16" height="13"><use href="#comp"/></svg><span class="pname">text-5</span><i></i><span class="pin-t"></span></li>
              <li class="prow prow-c"><i></i><svg width="16" height="13"><use href="#comp"/></svg><span class="pname">text-6</span><i></i><span class="pin-t"></span></li>
              <li class="prow prow-c"><i></i><svg width="16" height="13"><use href="#comp"/></svg><span class="pname">text-7</span><i></i><span class="pin-t"></span></li>
              <li class="prow prow-c"><i></i><svg width="16" height="13"><use href="#comp"/></svg><span class="pname">text-8</span><i></i><span class="pin-t"></span></li>
              <li class="prow prow-c"><i></i><svg width="16" height="13"><use href="#comp"/></svg><span class="pname">text-9</span><i></i><span class="pin-t"></span></li>
              <li class="prow prow-c"><i></i><svg width="16" height="13"><use href="#comp"/></svg><span class="pname">text-10</span><i></i><span class="pin-t"></span></li>
              <li class="prow prow-c"><i></i><svg width="16" height="13"><use href="#comp"/></svg><span class="pname">text-11</span><i></i><span class="pin-t"></span></li>
            </ul>
            <div class="typ-col"><svg width="14" height="12"><use href="#tree"/></svg></div>
          </div>
          <div class="proj-foot">
            <svg width="16" height="14"><use href="#newcomp"/></svg>
            <svg width="13" height="11"><use href="#folder"/></svg>
            <svg width="16" height="14"><use href="#imgico"/></svg>
            <span class="c-blue">8 bpc</span>
            <svg width="11" height="13"><use href="#trash"/></svg>
            <span class="foot-dark"></span>
          </div>
        </section>

        <section class="p-comp ph d-flex flex-column">
          <div class="tabrow d-flex align-items-center">
            <div class="tabx tab-comp d-flex align-items-center"><span class="c-mid">×</span><span class="sw"></span><svg class="comp-lock" width="9" height="12"><use href="#lock"/></svg><span class="comp-name">Composition&nbsp;<span class="c-blue">text-1</span></span><span class="menu3 comp-menu"></span></div>
            <div class="tab-blank tab-layer d-flex align-items-center c-dim">Layer (none)</div>
            <div class="tab-blank tab-foot d-flex align-items-center c-dim">Footage (none)</div>
          </div>
          <div class="crumbs">
            <i></i><span>Final Output 1080i HD</span><svg width="5" height="8"><use href="#lt"/></svg><span>Final Composed</span><svg width="5" height="8"><use href="#lt"/></svg><span>Main Scene</span><svg width="5" height="8"><use href="#lt"/></svg><span class="crumb-on c-blue">text-1</span><i></i>
            <div class="renderer d-flex align-items-center c-mid">Renderer: <span>Classic 3D</span></div>
          </div>
          <div class="viewer d-flex">
            <div class="v-left">Active Camera</div>
            <div class="canvas-col">
              <div class="canvas d-flex justify-content-center overflow-hidden"><span class="enter">ENTER</span></div>
              <div class="canvas-dots"></div>
            </div>
          </div>
          <div class="comp-foot">
            <svg width="14" height="14"><use href="#fr1"/></svg>
            <svg width="14" height="14"><use href="#mon"/></svg>
            <span>(74.3%)</span>
            <svg width="8" height="6"><use href="#dn"/></svg>
            <svg width="14" height="14"><use href="#gridc"/></svg>
            <svg width="14" height="14"><use href="#mask"/></svg>
            <span class="c-lite">0:00:00:16</span>
            <svg width="14" height="12"><use href="#camr"/></svg>
            <svg width="14" height="14"><use href="#snapb"/></svg>
            <svg width="14" height="14"><use href="#rgb"/></svg>
            <span>Full</span>
            <svg width="8" height="6"><use href="#dn"/></svg>
            <svg width="14" height="14"><use href="#rr"/></svg>
            <svg width="14" height="14"><use href="#check"/></svg>
            <span>Active Camera</span>
            <svg width="8" height="6"><use href="#dn"/></svg>
            <span>1 View</span>
            <svg width="8" height="6"><use href="#dn"/></svg>
            <svg width="14" height="14"><use href="#lr"/></svg>
            <svg width="14" height="14"><use href="#fast"/></svg>
            <svg width="14" height="14"><use href="#flow"/></svg>
            <svg width="14" height="14"><use href="#tree"/></svg>
            <svg width="14" height="14"><use href="#shutter"/></svg>
            <span class="c-blue">+0.0</span>
          </div>
        </section>
      </div>

      <section class="tl ph">
        <div class="tl-tabs">
          <span class="c-dim">&nbsp;:</span>
          <div class="tl-on d-flex align-items-center"><span class="c-mid">×</span><span class="sw"></span><span>text-1</span><span class="menu3 tl-menu"></span></div>
          <div class="tl-t tl-t2 d-flex align-items-center"><span class="sw"></span>text-2</div>
          <div class="tl-t d-flex align-items-center"><span class="sw"></span>text-3</div>
          <div class="tl-t d-flex align-items-center"><span class="sw"></span>text-4</div>
          <div class="tl-t d-flex align-items-center"><span class="sw"></span>text-5</div>
          <div class="tl-t d-flex align-items-center"><span class="sw"></span>text-6</div>
          <div class="tl-t d-flex align-items-center"><span class="sw"></span>text-7</div>
          <div class="tl-t d-flex align-items-center"><span class="sw"></span>text-8</div>
          <div class="tl-t d-flex align-items-center"><span class="sw"></span>text-9</div>
          <div class="tl-t d-flex align-items-center"><span class="sw"></span>text-10</div>
          <div class="tl-t d-flex align-items-center"><span class="sw"></span>text-11</div>
          <div class="tl-t d-flex align-items-center"><span class="sw"></span>Main Scene</div>
          <div class="tl-t d-flex align-items-center"><span class="sw"></span>Final Composed</div>
          <div class="tl-t d-flex align-items-center"><span class="sw"></span>Final Output 1080i HD</div>
          <span class="dbl">»</span>
        </div>
        <div class="tl-wrap">
          <div class="tl-main d-flex">
            <div class="tl-l">
              <div class="tl-ctl d-flex align-items-center">
                <div class="tc-time"><div class="tc-big">0:00:00:16</div><div class="tc-sub">00016 (30.00 fps)</div></div>
                <div class="tc-find d-flex"><svg width="14" height="14"><use href="#find"/></svg><svg class="mt-2" width="5" height="4"><use href="#dn"/></svg></div>
                <div class="tc-searchbar"></div>
                <div class="tc-icons align-items-center">
                  <svg width="16" height="12"><use href="#comm"/></svg>
                  <svg width="18" height="18"><use href="#dcube"/></svg>
                  <svg width="18" height="16"><use href="#shyb"/></svg>
                  <svg width="14" height="18"><use href="#dfilm"/></svg>
                  <svg width="18" height="18"><use href="#dmb"/></svg>
                  <svg width="16" height="16"><use href="#graph"/></svg>
                </div>
              </div>
              <div class="lh">
                <div class="layer-grid">
                  <i></i>
                  <svg width="13" height="9"><use href="#eye"/></svg>
                  <svg width="11" height="11"><use href="#spk"/></svg>
                  <svg width="8" height="8"><circle cx="4" cy="4" r="4" fill="#c8c8c8"/></svg>
                  <svg width="9" height="11"><use href="#lock"/></svg>
                  <i></i>
                  <svg width="11" height="11"><use href="#tag"/></svg>
                  <span class="ps-2">#</span>
                  <i></i>
                  <span class="nudge-src">Source Name</span>
                  <i></i>
                  <div class="switch">
                    <svg width="12" height="10"><use href="#shy"/></svg>
                    <svg width="11" height="11"><use href="#sun"/></svg>
                    <svg width="11" height="11"><use href="#slash"/></svg>
                    <span class="gl gl-s fst-italic">fx</span>
                    <svg width="11" height="11"><use href="#film"/></svg>
                    <svg width="12" height="11"><use href="#mb"/></svg>
                    <svg width="11" height="11"><use href="#adj"/></svg>
                    <svg width="11" height="12"><use href="#cube"/></svg>
                  </div>
                  <i></i>
                  <span class="nudge-par">Parent</span>
                  <i></i>
                  <span>Stretch</span>
                </div>
              </div>
              <div class="lr lr1">
                <div class="layer-grid">
                  <i></i>
                  <svg width="13" height="9"><use href="#eye"/></svg>
                  <i></i><span class="dk"></span><span class="dk"></span>
                  <svg class="nudge-arr" width="7" height="8"><use href="#rt"/></svg>
                  <span class="label-p"></span>
                  <span class="lnum">1</span>
                  <svg width="11" height="11"><use href="#srcico"/></svg>
                  <span class="lname">MonkeyCam</span>
                  <i></i>
                  <div class="switch"><svg width="12" height="10"><use href="#shy"/></svg></div>
                  <svg class="nudge-spi" width="11" height="11"><use href="#spiral"/></svg>
                  <div class="pdrop d-flex align-items-center"><span class="pdrop-clip">2. MonkeyCam</span><svg width="8" height="6"><use href="#dn"/></svg></div>
                  <i></i>
                  <span class="c-blue pct">100.0%</span>
                </div>
              </div>
              <div class="lr lr2">
                <div class="layer-grid">
                  <i></i>
                  <svg width="13" height="9"><use href="#eye"/></svg>
                  <i></i><span class="dk"></span><span class="dk"></span>
                  <svg class="nudge-arr" width="7" height="8"><use href="#rt"/></svg>
                  <span class="label-r"></span>
                  <span class="lnum">3</span>
                  <span class="swcell"></span>
                  <span class="lname">TM Mast...ontrol</span>
                  <i></i>
                  <div class="switch"><svg width="12" height="10"><use href="#shy"/></svg><span class="dk"></span><svg width="11" height="11"><use href="#slash2"/></svg><i></i><span class="dk"></span><span class="dk"></span><i></i><svg width="11" height="12"><use href="#cube"/></svg></div>
                  <svg class="nudge-spi" width="11" height="11"><use href="#spiral"/></svg>
                  <div class="pdrop d-flex align-items-center"><span>None</span><svg width="8" height="6"><use href="#dn"/></svg></div>
                  <i></i>
                  <span class="c-blue pct">100.0%</span>
                </div>
              </div>
            </div>
            <div class="tl-r">
              <div class="tr-top"></div>
              <div class="tr-nav"><svg class="nav-end-l" width="4" height="8"><rect width="4" height="8" rx="1" fill="#39a9dd"/></svg><i class="nav-ph"></i><svg class="nav-end-r" width="4" height="8"><rect width="4" height="8" rx="1" fill="#39a9dd"/></svg></div>
              <div class="d-flex tr-ruler-row">
                <div class="tr-ruler">
                  <div class="ruler-in d-flex h-100">
                    <div class="rcell"><span>0:00f</span><i></i></div>
                    <div class="rcell"><span>10f</span><i></i></div>
                    <div class="rcell"><span>20f</span><i></i></div>
                    <div class="rcell"><span>01:00f</span><i></i></div>
                    <div class="rcell"><span>10f</span><i></i></div>
                    <div class="rcell"><span>20f</span><i></i></div>
                    <div class="rcell"><span>02:00f</span><i></i></div>
                    <div class="rcell"><span>10f</span><i></i></div>
                    <div class="rcell"><span>20f</span><i></i></div>
                    <div class="rcell"><span>03:00f</span><i></i></div>
                    <div class="rcell"><span>10f</span><i></i></div>
                    <div class="rcell"><span>20f</span><i></i></div>
                    <div class="rcell"><span>04:00f</span><i></i></div>
                    <div class="rcell"><span>10f</span><i></i></div>
                    <div class="rcell"><span>20f</span><i></i></div>
                    <div class="rcell"><span>05:00f</span><i></i></div>
                  </div>
                </div>
              </div>
              <div class="tr-work d-flex justify-content-between align-items-center">
                <span class="handle"></span>
                <div class="track-wrap justify-content-end ms-auto"><span class="handle"></span></div>
                <div class="track-end d-flex align-items-center justify-content-center"><svg width="11" height="15"><use href="#hshield"/></svg></div>
              </div>
              <div class="tr-green"><i></i></div>
              <div class="d-flex">
                <div class="track-wrap track"><div class="bar-p"></div></div>
                <div class="track-end d-flex align-items-center justify-content-center"><svg width="12" height="13"><use href="#dfilm"/></svg></div>
              </div>
              <div class="d-flex">
                <div class="track-wrap track">
                  <div class="bar-r">
                    <span class="mk mk1">ENTER</span><span class="mk-tri mt1"></span>
                    <span class="mk mk2">THE</span><span class="mk-tri mt2"></span>
                    <span class="mk mk3">DOMAIN</span><span class="mk-tri mt3"></span>
                  </div>
                </div>
                <div class="track-end"></div>
              </div>
              <div class="tr-rest"><i class="rest-a"></i><i class="rest-b"></i><i class="rest-c"></i></div>
              <i class="ph-line"></i>
              <svg class="ph-head" width="12" height="15"><use href="#head"/></svg>
            </div>
          </div>
          <div class="tl-bot">
            <svg width="13" height="13"><use href="#ic1"/></svg>
            <svg width="13" height="13"><use href="#ic2"/></svg>
            <svg width="9" height="13"><use href="#ic3"/></svg>
            <span>Toggle Switches / Modes</span>
            <div class="zoombar d-flex align-items-center"><svg class="z-a" width="9" height="6"><use href="#mtn1"/></svg><svg width="10" height="14"><use href="#slid"/></svg><i class="zline"></i><svg class="z-b" width="17" height="10"><use href="#mtn2"/></svg></div>
          </div>
        </div>
      </section>
    </div>

    <aside class="col-side">
      <section class="s-info ph">
        <div class="tabrow d-flex align-items-center"><div class="tab-info d-flex align-items-center"><span>Info</span><span class="menu3"></span></div><span class="c-dim ms-2 ps-1">Audio</span></div>
        <div class="info-c d-flex">
          <div class="ic-sw"></div>
          <div class="ic-rgb">R :<br>G :<br>B :<br>A : 0</div>
          <div class="ic-xy">X : -279<br>Y : 668<svg class="xy-cross" width="11" height="11"><use href="#cross"/></svg></div>
        </div>
      </section>
      <section class="s-prev ph">
        <div class="prev-h d-flex align-items-center"><span>Preview</span><span class="menu3"></span></div>
        <div class="prev-ctl">
          <svg width="12" height="11"><use href="#first"/></svg>
          <svg width="12" height="11"><use href="#prevf"/></svg>
          <svg width="12" height="12"><use href="#playf"/></svg>
          <svg width="12" height="11"><use href="#nextf"/></svg>
          <svg width="12" height="11"><use href="#last"/></svg>
          <svg width="14" height="13"><use href="#export"/></svg>
          <svg width="13" height="12"><use href="#spk"/></svg>
        </div>
        <div class="short-l">Shortcut</div>
        <div class="short-d d-flex align-items-center"><div class="dd-fill d-flex align-items-center justify-content-between"><span>Spacebar</span><svg width="9" height="6"><use href="#dn"/></svg></div><svg class="loop-gap" width="14" height="14"><use href="#loop"/></svg></div>
      </section>
      <section class="s-char">
        <div class="ch-tabs">
          <span class="c-dim">&nbsp;es</span>
          <div class="ch-on d-flex align-items-center"><span>Character</span><span class="menu3"></span></div>
          <span class="ps-3 c-dim">Brus</span>
          <span class="dbl text-end pe-1">»</span>
        </div>
        <div class="ch-top d-flex">
          <div class="dds">
            <div class="dd d-flex align-items-center justify-content-between"><span>OCR A Std</span><svg width="9" height="6"><use href="#dn"/></svg></div>
            <div class="dd d-flex align-items-center justify-content-between"><span>Regular</span><svg width="9" height="6"><use href="#dn"/></svg></div>
          </div>
          <div class="sw-zone position-relative">
            <svg class="s-drop" width="16" height="16"><use href="#drop"/></svg>
            <span class="s-bw"></span>
            <span class="s-none"><svg width="11" height="12"><use href="#lsm"/></svg></span>
            <span class="s-white"><svg width="27" height="28"><use href="#line"/></svg></span>
            <span class="s-brown"></span>
            <svg class="s-swap" width="11" height="11"><use href="#swap"/></svg>
          </div>
        </div>
        <div class="ch-sec ch-sec1">
          <div class="mg"><span class="gl">tT</span><span><span class="v">68</span> px</span><svg width="7" height="6"><use href="#dn"/></svg><span class="stack">↕<span>A<br>A</span></span><span><span class="v">25</span> px</span><svg width="7" height="6"><use href="#dn"/></svg></div>
          <div class="mg"><span class="kern">V/A</span><span class="c-dim">Metrics</span><svg width="7" height="6"><use href="#dn"/></svg><span><span class="va-box">VA</span></span><span class="v">-24</span><svg width="7" height="6"><use href="#dn"/></svg></div>
        </div>
        <div class="ch-sec ch-sec2">
          <div class="mg"><svg width="15" height="13"><use href="#eq"/></svg><span><span class="c-dim">-</span> px</span><svg width="7" height="6"><use href="#dn"/></svg><div class="ch-wide d-flex align-items-center justify-content-end"><svg width="9" height="6"><use href="#dn"/></svg></div></div>
        </div>
        <div class="ch-sec ch-sec3">
          <div class="mg"><span class="gl">↕T</span><span><span class="v">100</span> %</span><svg width="7" height="6"><use href="#dn"/></svg><span class="gl"><span class="wide-t">T</span></span><span><span class="v">100</span> %</span><svg width="7" height="6"><use href="#dn"/></svg></div>
          <div class="mg"><span class="gl gl-s">Aª</span><span><span class="v">0</span> px</span><svg width="7" height="6"><use href="#dn"/></svg><span class="gl gl-s ps-2"><span class="jp">あ</span></span><span><span class="v">0</span> %</span><svg width="7" height="6"><use href="#dn"/></svg></div>
        </div>
        <div class="ch-sec ch-sec4">
          <div class="ch-styles"><span class="gl">T</span><span class="gl fst-italic">T</span><span class="gl">TT</span><span class="gl">Tт</span><span class="gl">T¹</span><span class="gl">T₁</span></div>
        </div>
      </section>
      <section class="s-para ph">
        <div class="para-h d-flex align-items-center"><span>Paragraph</span><span class="menu3"></span></div>
        <div class="para-al">
          <svg width="15" height="15"><use href="#al"/></svg>
          <svg width="15" height="15"><use href="#ac"/></svg>
          <svg width="15" height="15"><use href="#ar"/></svg>
          <svg width="15" height="15"><use href="#aj"/></svg>
          <svg width="15" height="15"><use href="#aj"/></svg>
          <svg width="15" height="15"><use href="#aj"/></svg>
          <svg width="15" height="15"><use href="#aj"/></svg>
        </div>
        <div class="pp"><svg width="13" height="13"><use href="#pa"/></svg><span><span class="v">0</span> px</span><svg width="13" height="13"><use href="#pc"/></svg><span><span class="v">0</span> px</span><svg width="13" height="13"><use href="#pc"/></svg><span><span class="v">0</span> px</span></div>
        <div class="pp"><svg width="13" height="13"><use href="#pb"/></svg><span><span class="v">0</span> px</span><svg width="13" height="13"><use href="#pc"/></svg><span><span class="v">-3</span> px</span></div>
      </section>
    </aside>
  </div>
  <footer class="task d-flex"><i></i><i></i><i></i><i></i><i></i></footer>
</div>
</body>
</html>
